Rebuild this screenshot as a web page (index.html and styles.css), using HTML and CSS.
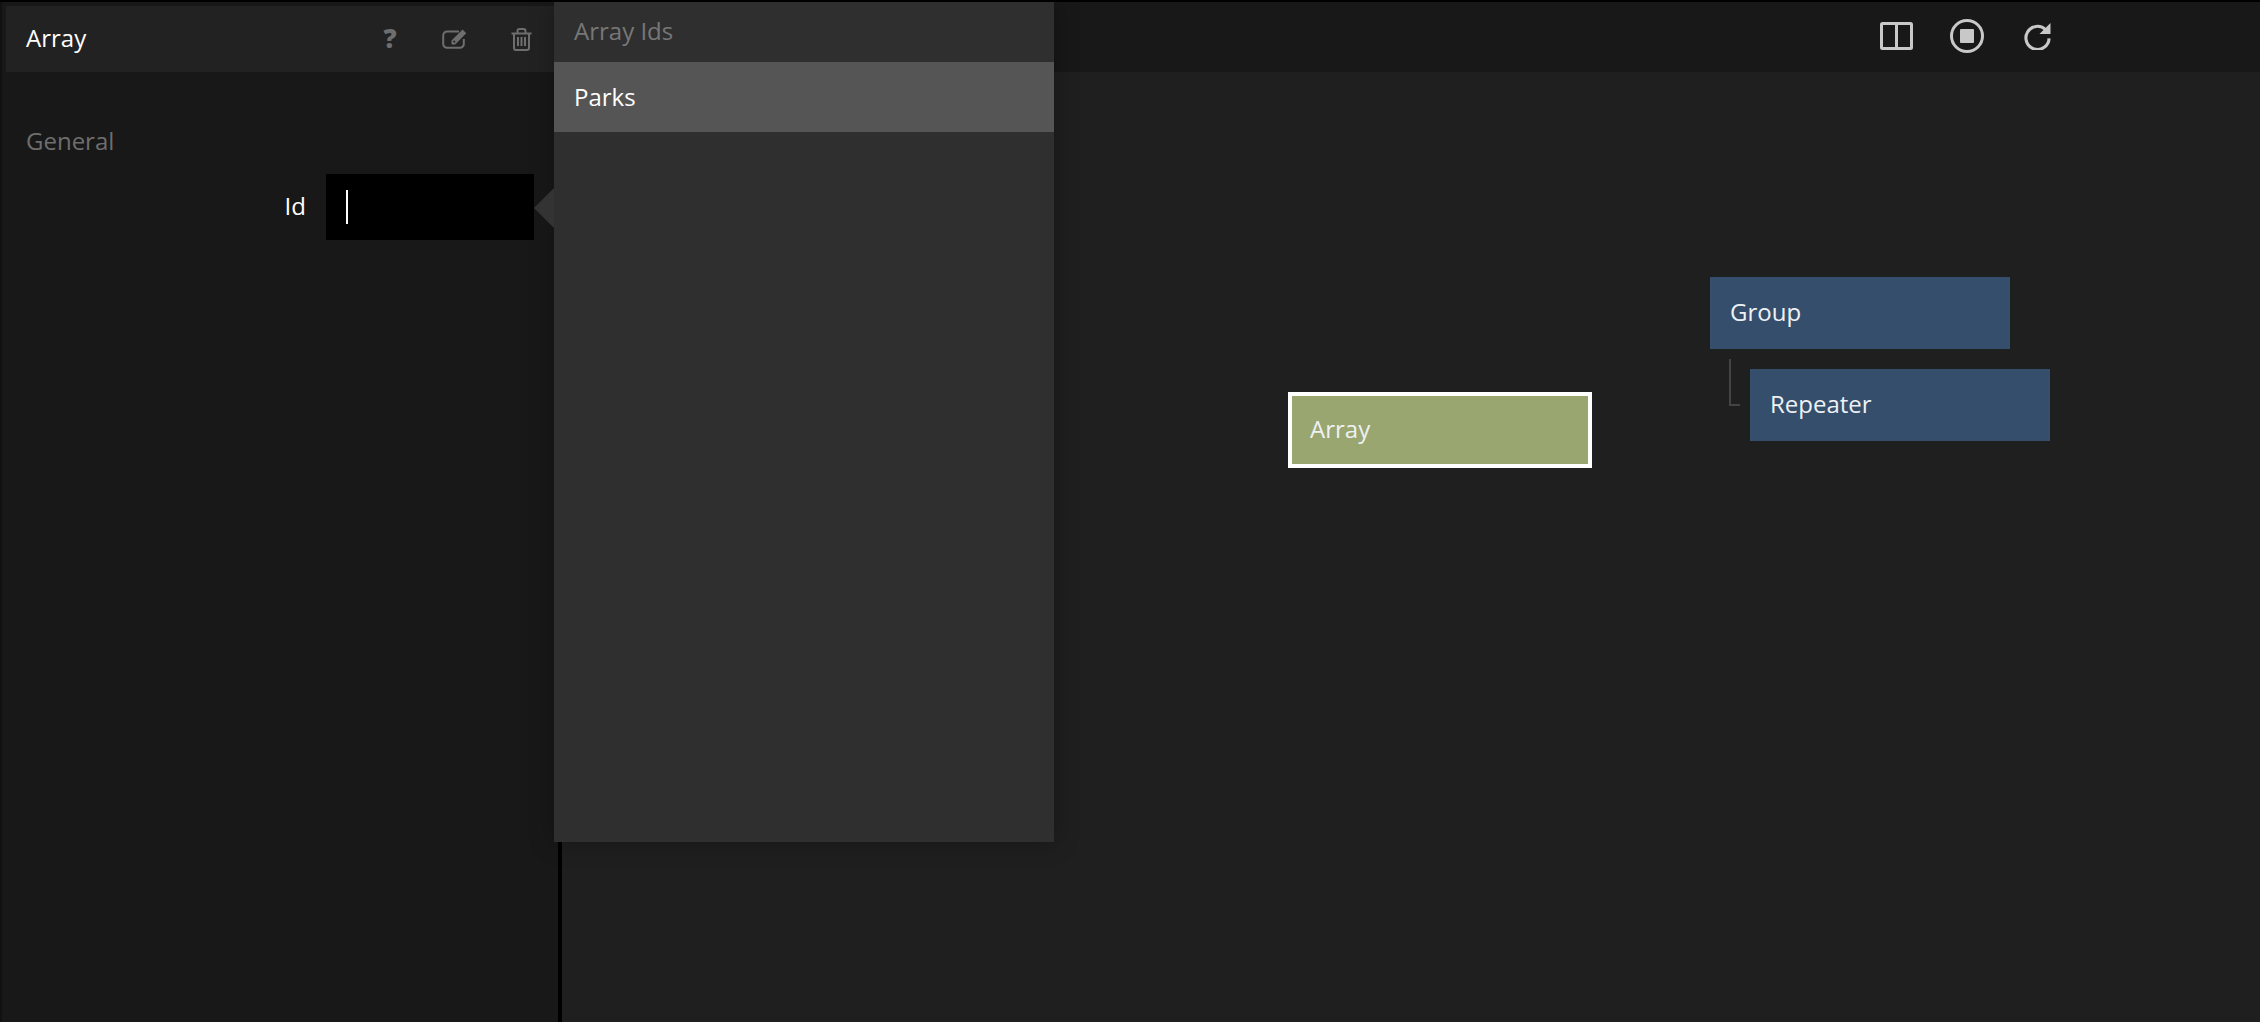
FILE: index.html
```html
<!DOCTYPE html>
<html lang="en">
<head>
<meta charset="utf-8">
<title>Array</title>
<link rel="stylesheet" href="styles.css">
</head>
<body>
<div class="app">
  <aside class="sidebar">
    <header class="side-head">
      <span class="side-title">Array</span>
      <div class="side-tools">
        <span class="tool-help">?</span>
        <svg class="tool-edit" viewBox="0 0 26 21" aria-hidden="true">
          <path d="M17 3.500H5.500A4 4 0 0 0 1.200 7.500v8.500a3.800 3.800 0 0 0 4 3.800h12.600a3.800 3.800 0 0 0 4-3.800v-5" fill="none" stroke="currentColor" stroke-width="2"/>
          <path d="M9.500 12.600 20.600 1.600l3.700 3.700L13.200 16.400H9.500z" fill="currentColor"/>
          <path d="M11 13.200h1.600v1.600" fill="none" stroke="#222" stroke-width="1.100"/>
        </svg>
        <svg class="tool-trash" viewBox="0 0 21 23" aria-hidden="true">
          <path d="M0.500 5.500h20" stroke="currentColor" stroke-width="2" fill="none"/>
          <path d="M6.500 5V3a2 2 0 0 1 2-2h4a2 2 0 0 1 2 2v2" stroke="currentColor" stroke-width="2" fill="none"/>
          <path d="M3 5.500V20a2 2 0 0 0 2 2h11a2 2 0 0 0 2-2V5.500" stroke="currentColor" stroke-width="2" fill="none"/>
          <path d="M7 9v9M10.500 9v9M14 9v9" stroke="currentColor" stroke-width="2" fill="none"/>
        </svg>
      </div>
    </header>
    <section class="side-body">
      <h2 class="section-title">General</h2>
      <div class="field">
        <label class="field-label">Id</label>
        <div class="field-input"><span class="caret"></span></div>
      </div>
    </section>
  </aside>
  <main class="main">
    <div class="topbar">
      <svg class="top-columns" viewBox="0 0 33 28" aria-hidden="true">
        <rect x="1.500" y="1.500" width="30" height="25" rx="1" fill="none" stroke="currentColor" stroke-width="3"/>
        <path d="M16.500 2v24" stroke="currentColor" stroke-width="3"/>
      </svg>
      <svg class="top-stop" viewBox="0 0 34 34" aria-hidden="true">
        <circle cx="17" cy="17" r="15.500" fill="none" stroke="currentColor" stroke-width="3"/>
        <rect x="10" y="10" width="14" height="14" rx="1" fill="currentColor"/>
      </svg>
      <svg class="top-reload" viewBox="0 0 28 28" aria-hidden="true">
        <path d="M22.500 7.500A12 12 0 1 0 26 16.500" fill="none" stroke="currentColor" stroke-width="3.200"/>
        <path d="M27.500 0.500V12H16z" fill="currentColor"/>
      </svg>
    </div>
    <div class="canvas">
      <div class="node node-green">Array</div>
      <div class="node node-blue node-group">Group</div>
      <div class="link"></div>
      <div class="node node-blue node-repeater">Repeater</div>
    </div>
  </main>
</div>
<div class="popup">
  <div class="popup-arrow"></div>
  <div class="popup-head">Array Ids</div>
  <div class="popup-item">Parks</div>
</div>
</body>
</html>
```
FILE: styles.css
```css
* { box-sizing: border-box; }
html, body { margin: 0; height: 100%; overflow: hidden; }
body {
  background: #000;
  color: #fff;
  font-family: "Open Sans", "Noto Sans", sans-serif;
  font-size: 24px;
  position: relative;
}
.app {
  display: flex;
  height: 1022px;
  padding-top: 2px;
}
.sidebar {
  width: 562px;
  flex: none;
  background: #181818;
  border-left: 2px solid #111;
  border-right: 4px solid #000;
  padding: 4px 0 0 4px;
}
.side-head {
  height: 66px;
  background: #222;
  display: flex;
  align-items: center;
  justify-content: space-between;
  padding: 0 26px 2px 20px;
}
.side-title { line-height: 1; }
.side-tools {
  display: flex;
  align-items: center;
  color: #6e6e6e;
}
.tool-help {
  font-weight: 800;
  font-size: 26px;
  line-height: 30px;
  width: 16px;
  text-align: center;
  margin-right: 44px;
}
.tool-edit { width: 26px; height: 21px; margin-right: 43px; display: block; }
.tool-trash { width: 21px; height: 23px; display: block; margin-top: 2px; }
.side-body { padding: 51px 0 0 20px; }
.section-title {
  margin: 0;
  font-weight: 400;
  font-size: 24px;
  line-height: 36px;
  color: #6e6e6e;
}
.field {
  display: flex;
  align-items: center;
  margin-top: 15px;
}
.field-label {
  width: 280px;
  text-align: right;
  padding-bottom: 3px;
}
.field-input {
  width: 208px;
  height: 66px;
  margin-left: 20px;
  background: #000;
  display: flex;
  align-items: center;
  padding-left: 20px;
}
.caret { width: 2px; height: 34px; background: #fff; }
.main {
  flex: 1;
  display: flex;
  flex-direction: column;
  min-width: 0;
}
.topbar {
  height: 70px;
  flex: none;
  background: #181818;
  display: flex;
  align-items: center;
  justify-content: flex-end;
  padding: 0 209px 2px 0;
  color: #c8c8c8;
}
.top-columns { width: 33px; height: 28px; display: block; margin-right: 37px; }
.top-stop { width: 34px; height: 34px; display: block; margin-right: 40px; }
.top-reload { width: 27px; height: 28px; display: block; }
.canvas {
  flex: 1;
  position: relative;
  background: #1f1f1f;
}
.node {
  position: absolute;
  display: flex;
  align-items: center;
  width: 300px;
  height: 72px;
  padding: 0 0 4px 20px;
  color: #eef1f4;
}
.node-blue { background: #344e6c; }
.node-group { left: 1148px; top: 205px; }
.node-repeater { left: 1188px; top: 297px; }
.node-green {
  left: 726px;
  top: 320px;
  width: 304px;
  height: 76px;
  padding: 0 0 4px 18px;
  background: #99a66f;
  border: 4px solid #fff;
}
.link {
  position: absolute;
  left: 1167px;
  top: 287px;
  width: 11px;
  height: 47px;
  border-left: 2px solid #444;
  border-bottom: 2px solid #444;
}
.popup {
  position: absolute;
  left: 554px;
  top: 2px;
  width: 500px;
  height: 840px;
  background: #2f2f2f;
  box-shadow: 0 0 24px rgba(0, 0, 0, 0.3);
}
.popup-arrow {
  position: absolute;
  left: -20px;
  top: 186px;
  width: 0;
  height: 0;
  border-top: 20px solid transparent;
  border-bottom: 20px solid transparent;
  border-right: 20px solid #333;
}
.popup-head {
  height: 60px;
  display: flex;
  align-items: center;
  padding: 0 0 3px 20px;
  color: #777;
}
.popup-item {
  height: 70px;
  display: flex;
  align-items: center;
  padding: 0 0 2px 20px;
  background: #555;
}
```
